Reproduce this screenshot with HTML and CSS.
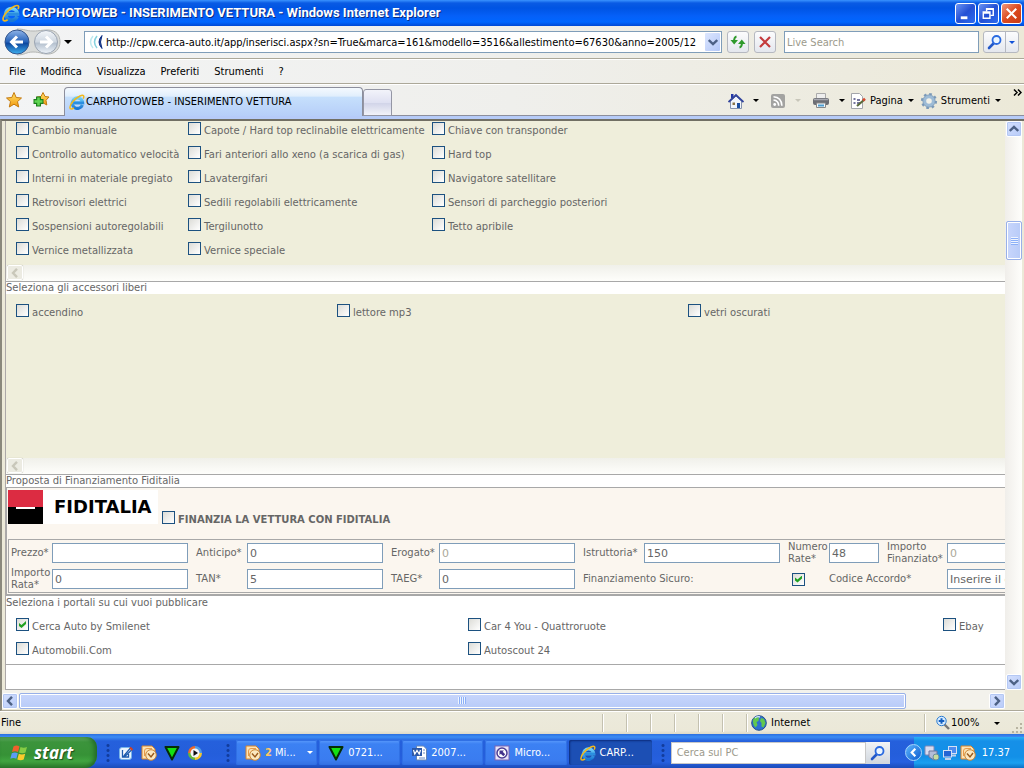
FILE: index.html
```html
<!DOCTYPE html>
<html lang="it">
<head>
<meta charset="utf-8">
<title>CARPHOTOWEB - INSERIMENTO VETTURA</title>
<link rel="stylesheet" href="styles.css">
</head>
<body>
<svg class="defs" aria-hidden="true">
  <defs>
    <linearGradient id="g-blue" x1="0" y1="0" x2="0" y2="1"><stop offset="0" stop-color="#8fb4e8"/><stop offset=".5" stop-color="#2461b8"/><stop offset=".55" stop-color="#0c469e"/><stop offset="1" stop-color="#3fb0ee"/></linearGradient>
    <linearGradient id="g-gray" x1="0" y1="0" x2="0" y2="1"><stop offset="0" stop-color="#f4f7fa"/><stop offset=".5" stop-color="#cdd6e0"/><stop offset=".55" stop-color="#b4c0ce"/><stop offset="1" stop-color="#eef4fa"/></linearGradient>
    <linearGradient id="g-e" x1="0" y1="0" x2="0" y2="1"><stop offset="0" stop-color="#6cd0fa"/><stop offset="1" stop-color="#1a78d4"/></linearGradient>
    <linearGradient id="g-star" x1="0" y1="0" x2="0" y2="1"><stop offset="0" stop-color="#ffe26a"/><stop offset="1" stop-color="#f39a10"/></linearGradient>
  </defs>
  <symbol id="ie" viewBox="0 0 16 16">
    <path d="M13.400 11A5.200 5.200 0 1 1 13.700 8.800H4" fill="none" stroke="url(#g-e)" stroke-width="3.200"/>
    <path d="M4.200 8.800H15" stroke="#2a8ee0" stroke-width="2.200"/>
    <path d="M14.200 4.600C15.600 1.800 14.400.4 11 2 6 4.400 1 10 .9 13.400.9 15.600 3 15.300 5 14" fill="none" stroke="#f2b91c" stroke-width="1.500"/>
  </symbol>
  <symbol id="outlook" viewBox="0 0 16 16">
    <path d="M1 1h10l3 3v3H8v7H1z" fill="#fde3b4" stroke="#d6822a"/>
    <path d="M3.500 11V6q0-2.500 2.500-2.500h5" fill="none" stroke="#e89a48"/>
    <circle cx="10" cy="10" r="5.300" fill="#fbe8c0" stroke="#c98432"/>
    <path d="M7 8.500l3 3.500 3-4" fill="none" stroke="#9a5a1c" stroke-width="1.400"/>
  </symbol>
  <symbol id="tri" viewBox="0 0 16 16"><path d="M1.500 2h13L8 14.500z" fill="#14e014" stroke="#062c06" stroke-width="2" stroke-linejoin="round"/></symbol>
  <symbol id="lens" viewBox="0 0 16 16"><path d="M6.500 9.500L2 14" stroke="#2358c8" stroke-width="2.600" stroke-linecap="round"/><circle cx="9.500" cy="6" r="4" fill="#eaf5ff" stroke="#2a6ae0" stroke-width="1.800"/></symbol>
  <symbol id="plus-lens" viewBox="0 0 16 16"><path d="M9 9l5 5" stroke="#777" stroke-width="2.400"/><circle cx="6.500" cy="6" r="4.700" fill="#d8ecff" stroke="#2b7bd0"/><path d="M6.500 3.200v5.600M3.700 6h5.600" stroke="#1560c0" stroke-width="2"/></symbol>
  <symbol id="chev-left" viewBox="0 0 10 10"><path d="M7 .8L3 5l4 4.200" fill="none" stroke="currentColor" stroke-width="2.400"/></symbol>
  <symbol id="chev-right" viewBox="0 0 10 10"><path d="M3 .8L7 5 3 9.200" fill="none" stroke="currentColor" stroke-width="2.400"/></symbol>
  <symbol id="chev-up" viewBox="0 0 10 10"><path d="M.8 7L5 3l4.200 4" fill="none" stroke="currentColor" stroke-width="2.400"/></symbol>
  <symbol id="chev-down" viewBox="0 0 10 10"><path d="M.8 3L5 7l4.200-4" fill="none" stroke="currentColor" stroke-width="2.400"/></symbol>
</svg>

<header class="titlebar">
  <svg class="i18"><use href="#ie"/></svg>
  <h1>CARPHOTOWEB - INSERIMENTO VETTURA - Windows Internet Explorer</h1>
  <div class="win-buttons">
    <button class="win" aria-label="Riduci a icona"><svg viewBox="0 0 20 20"><path d="M5 14.500h7" stroke="#fff" stroke-width="3"/></svg></button>
    <button class="win" aria-label="Ripristina"><svg viewBox="0 0 20 20"><path d="M8 8V5h7v7h-3M8 5.500h7" fill="none" stroke="#fff" stroke-width="1.500"/><path d="M4.500 8.500h7v6.500h-7zM4.500 9.500h7" fill="none" stroke="#fff" stroke-width="1.500"/></svg></button>
    <button class="win close" aria-label="Chiudi"><svg viewBox="0 0 20 20"><path d="M5 5l10 10M15 5L5 15" stroke="#fff" stroke-width="2.200"/></svg></button>
  </div>
</header>

<div class="address-row">
  <button class="nav" aria-label="Indietro e avanti"><svg viewBox="0 0 58 28">
    <path d="M14 1c8 0 9 2 16 2s8-1 15-1c8 0 12 5 12 12s-5 12-12 12c-7 0-8-2-15-2s-8 3-16 3" fill="#d9dbd9" stroke="#b4b6b4"/>
    <circle cx="14" cy="14" r="12" fill="url(#g-blue)" stroke="#34558c"/>
    <path d="M20 14H9M14 8.500L8.500 14l5.500 5.500" fill="none" stroke="#fff" stroke-width="3"/>
    <circle cx="43" cy="14" r="11.500" fill="url(#g-gray)" stroke="#9aa4b2"/>
    <path d="M37 14h11M43 8.500l5.500 5.500-5.500 5.500" fill="none" stroke="#fff" stroke-width="3"/>
  </svg></button>
  <button class="drop" aria-label="Pagine recenti"><i class="arrow"></i></button>
  <div class="address">
    <svg class="i16" viewBox="0 0 16 16"><path d="M5 2Q0 8 5 14" fill="none" stroke="#bfe9ee" stroke-width="1.500"/><path d="M9 2Q4 8 9 14" fill="none" stroke="#86d2de" stroke-width="1.500"/><path d="M14 1.500Q8 8 14 14.500Q11 8 14 1.500z" fill="#0a2c80" stroke="#0a2c80"/></svg>
    <input aria-label="Indirizzo" value="http://cpw.cerca-auto.it/app/inserisci.aspx?sn=True&amp;marca=161&amp;modello=3516&amp;allestimento=67630&amp;anno=2005/12">
    <button class="combo" aria-label="Mostra indirizzi"><svg><use href="#chev-down"/></svg></button>
  </div>
  <button class="sq" aria-label="Aggiorna"><svg viewBox="0 0 16 16"><path d="M6.500 2.500Q4 3 4 8" fill="none" stroke="#2f9a2c" stroke-width="2"/><path d="M.5 6H8L4.200 10.500z" fill="#2f9a2c"/><path d="M9.500 13.500Q12 13 12 8" fill="none" stroke="#2f9a2c" stroke-width="2"/><path d="M8 10h7.500L11.800 5.500z" fill="#2f9a2c"/></svg></button>
  <button class="sq" aria-label="Interrompi"><svg viewBox="0 0 16 16"><path d="M3 3l10 10M13 3L3 13" stroke="#c43a3c" stroke-width="2.200"/></svg></button>
  <input class="live" aria-label="Live Search" placeholder="Live Search">
  <div class="search-pair">
    <button aria-label="Cerca"><svg class="i16"><use href="#lens"/></svg></button>
    <button aria-label="Opzioni di ricerca"><i class="arrow blue"></i></button>
  </div>
</div>

<nav class="menu">
  <a href="#">File</a><a href="#">Modifica</a><a href="#">Visualizza</a><a href="#">Preferiti</a><a href="#">Strumenti</a><a href="#">?</a>
</nav>

<div class="tab-row">
  <button class="bare" aria-label="Preferiti"><svg class="i18" viewBox="0 0 18 18"><path d="M9 1.500l2.200 5 5.300.5-4 3.600 1.200 5.400L9 13.200 4.300 16l1.200-5.400-4-3.600 5.300-.5z" fill="url(#g-star)" stroke="#c47a10"/></svg></button>
  <button class="bare" aria-label="Aggiungi a Preferiti"><svg class="i18" viewBox="0 0 18 18"><path d="M11 1.500l2 4 4 .5-3 3.300.8 4.700-3.800-2.200L7 14l.8-5L5 6l4-.5z" fill="url(#g-star)" stroke="#c47a10"/><path d="M6.500 5.500v10M1.500 10.500h10" stroke="#1c7d1c" stroke-width="5"/><path d="M6.500 6.500v8M2.500 10.500h8" stroke="#5fd552" stroke-width="2.600"/></svg></button>
  <a class="tab" href="#"><svg class="i16"><use href="#ie"/></svg>CARPHOTOWEB - INSERIMENTO VETTURA</a>
  <button class="new-tab" aria-label="Nuova scheda"></button>
  <div class="commands">
    <button class="cmd" aria-label="Pagina iniziale"><svg class="i16" viewBox="0 0 16 16"><path d="M3 1h2.500v4H3z" fill="#2438a8"/><path d="M2.500 8L8 3l5.500 5v7.500h-11z" fill="#f2f5fb" stroke="#8492ae"/><path d="M.5 9L8 2l7.500 7" fill="none" stroke="#32449c" stroke-width="1.800"/><path d="M9 10h3v5H9z" fill="#1c4ea0"/><path d="M4.500 9.500h2.500v2.500H4.500z" fill="#8a7448"/></svg><i class="arrow"></i></button>
    <button class="cmd" aria-label="Feed"><svg class="i16" viewBox="0 0 16 16"><rect x="1" y="1" width="14" height="14" rx="2" fill="#a3a3a1"/><circle cx="4.700" cy="11.500" r="1.400" fill="#fff"/><path d="M3.500 7q5 .5 5.200 5.700M3.500 3.800q8 .6 8.400 8.900" fill="none" stroke="#fff" stroke-width="1.600"/></svg><i class="arrow dim"></i></button>
    <button class="cmd print" aria-label="Stampa"><svg class="i18" viewBox="0 0 18 18"><path d="M4.500 1.500h9V8h-9z" fill="#eee" stroke="#aaa"/><rect x="1" y="6" width="16" height="7" rx="2" fill="#6c6e74"/><path d="M2 7.500h14" stroke="#a8aab2" stroke-width="1.500"/><path d="M4.500 11h9v4.500h-9z" fill="#f4f8fc" stroke="#888"/><path d="M6 13.500h6" stroke="#4f9fd0" stroke-width="2"/></svg><i class="arrow"></i></button>
    <button class="cmd tight"><svg class="i18" viewBox="0 0 18 18"><path d="M2.500 1.500h8l3 3v12h-11z" fill="#fff" stroke="#a3a5aa"/><path d="M4.500 7h2M4.500 11h2M8 8h3M8 11h3" stroke="#4a4a80" stroke-width="1.500"/><path d="M8 14l7.500-6.500" stroke="#5a6a3c" stroke-width="2.200"/><path d="M14 8.500l2-1.800" stroke="#d94a30" stroke-width="2.500"/></svg>Pagina<i class="arrow"></i></button>
    <button class="cmd tight"><svg class="i18" viewBox="0 0 18 18"><circle cx="9" cy="9" r="6.800" fill="none" stroke="#7c9ab8" stroke-width="2.600" stroke-dasharray="2.600 2.740"/><circle cx="9" cy="9" r="4.500" fill="#f1f0e8" stroke="#9dbbd6" stroke-width="3.400"/><circle cx="9" cy="9" r="6.200" fill="none" stroke="#6f8fae" stroke-width=".6"/></svg>Strumenti<i class="arrow"></i></button>
  </div>
  <button class="bare more" aria-label="Altri comandi"><svg viewBox="0 0 9 7"><path d="M1 .5l3 3-3 3M5 .5l3 3-3 3" fill="none" stroke="#000" stroke-width="1.500"/></svg></button>
</div>

<main class="viewport">
  <div class="page-line">
    <div class="page">
      <section class="group opts">
        <label><input type="checkbox"><span>Cambio manuale</span></label>
        <label><input type="checkbox"><span>Capote / Hard top reclinabile elettricamente</span></label>
        <label><input type="checkbox"><span>Chiave con transponder</span></label>
        <label><input type="checkbox"><span>Controllo automatico velocità</span></label>
        <label><input type="checkbox"><span>Fari anteriori allo xeno (a scarica di gas)</span></label>
        <label><input type="checkbox"><span>Hard top</span></label>
        <label><input type="checkbox"><span>Interni in materiale pregiato</span></label>
        <label><input type="checkbox"><span>Lavatergifari</span></label>
        <label><input type="checkbox"><span>Navigatore satellitare</span></label>
        <label><input type="checkbox"><span>Retrovisori elettrici</span></label>
        <label><input type="checkbox"><span>Sedili regolabili elettricamente</span></label>
        <label><input type="checkbox"><span>Sensori di parcheggio posteriori</span></label>
        <label><input type="checkbox"><span>Sospensioni autoregolabili</span></label>
        <label><input type="checkbox"><span>Tergilunotto</span></label>
        <label><input type="checkbox"><span>Tetto apribile</span></label>
        <label><input type="checkbox"><span>Vernice metallizzata</span></label>
        <label><input type="checkbox"><span>Vernice speciale</span></label>
      </section>
      <div class="strip"><button aria-label="Scorri a sinistra" disabled><svg><use href="#chev-left"/></svg></button></div>
      <h2>Seleziona gli accessori liberi</h2>
      <section class="group free">
        <label><input type="checkbox"><span>accendino</span></label>
        <label><input type="checkbox"><span>lettore mp3</span></label>
        <label><input type="checkbox"><span>vetri oscurati</span></label>
      </section>
      <div class="strip"><button aria-label="Scorri a sinistra" disabled><svg><use href="#chev-left"/></svg></button></div>
      <h2>Proposta di Finanziamento Fiditalia</h2>
      <section class="finance">
        <div class="brand-row">
          <div class="brand">
            <svg viewBox="0 0 35 34"><path d="M0 0h35v17H0z" fill="#dc2c42"/><path d="M0 17h35v17H0z" fill="#000"/><path d="M8 18h19" stroke="#fff" stroke-width="2"/></svg>
            <strong>FIDITALIA</strong>
          </div>
          <label class="fund"><input type="checkbox"><span>FINANZIA LA VETTURA CON FIDITALIA</span></label>
        </div>
        <form class="fields">
          <label for="f1">Prezzo*</label><input id="f1">
          <label for="f2">Anticipo*</label><input id="f2" value="0">
          <label for="f3">Erogato*</label><input id="f3" value="0" class="off" readonly>
          <label for="f4">Istruttoria*</label><input id="f4" value="150">
          <label for="f5">Numero Rate*</label><input id="f5" value="48">
          <label for="f6">Importo Finanziato*</label><input id="f6" value="0" class="off" readonly>
          <label for="f7">Importo Rata*</label><input id="f7" value="0">
          <label for="f8">TAN*</label><input id="f8" value="5">
          <label for="f9">TAEG*</label><input id="f9" value="0">
          <label for="f10" class="span2">Finanziamento Sicuro:</label><input id="f10" type="checkbox" checked>
          <label for="f11" class="span2">Codice Accordo*</label><input id="f11" value="Inserire il codice">
        </form>
      </section>
      <h2>Seleziona i portali su cui vuoi pubblicare</h2>
      <section class="portals">
        <label><input type="checkbox" checked><span>Cerca Auto by Smilenet</span></label>
        <label><input type="checkbox"><span>Car 4 You - Quattroruote</span></label>
        <label><input type="checkbox"><span>Ebay</span></label>
        <label><input type="checkbox"><span>Automobili.Com</span></label>
        <label><input type="checkbox"><span>Autoscout 24</span></label>
      </section>
    </div>
    <div class="vscroll">
      <button class="sb" aria-label="Scorri in alto"><svg><use href="#chev-up"/></svg></button>
      <div class="vtrack"><div class="vthumb"></div></div>
      <button class="sb" aria-label="Scorri in basso"><svg><use href="#chev-down"/></svg></button>
    </div>
  </div>
  <div class="hscroll">
    <button class="sb" aria-label="Scorri a sinistra"><svg><use href="#chev-left"/></svg></button>
    <div class="htrack"><div class="hthumb"></div></div>
    <button class="sb" aria-label="Scorri a destra"><svg><use href="#chev-right"/></svg></button>
  </div>
</main>

<div class="status">
  <span class="done">Fine</span>
  <i class="cell"></i><i class="cell"></i><i class="cell"></i><i class="cell"></i><i class="cell"></i><i class="cell"></i>
  <span class="zone"><svg class="i16" viewBox="0 0 16 16"><circle cx="8" cy="8" r="7.300" fill="#2e6fd0" stroke="#24508c"/><path d="M2.500 3.500q3-2.500 5.500-1l-.5 3.500-2 1 1 3-2 2.500Q.8 9 2.500 3.500zM10 3l3 1 1.500 4-2 4.500-2-1V8L9 6z" fill="#62c84c"/><path d="M4 3q2-2 5-1" stroke="#cfe8ff" stroke-width="1.400" fill="none"/></svg>Internet</span>
  <button class="zoom"><svg class="i16"><use href="#plus-lens"/></svg>100%<i class="arrow"></i></button>
  <svg class="grip" viewBox="0 0 12 12"><path d="M9 1h2v2H9zM9 5h2v2H9zM9 9h2v2H9zM5 5h2v2H5zM5 9h2v2H5zM1 9h2v2H1z" fill="#b8b4a2"/></svg>
</div>

<footer class="taskbar">
  <button class="start"><svg viewBox="0 0 20 18"><path d="M3.500 2.500q3-2 6 0L8 8q-3-1.600-6 0z" fill="#f0602c"/><path d="M10.500 3q3 1.600 6.500 0L15.500 8.500q-3 1.600-6.500 0z" fill="#86cc44"/><path d="M1.800 9.200q3-1.600 6 0L6.300 14.800q-3-1.600-6 0z" fill="#5c9cf4"/><path d="M8.800 9.800q3 1.600 6.400 0l-1.500 5.700q-3 1.600-6.400 0z" fill="#fbcb2c"/></svg>start</button>
  <i class="dots"></i>
  <div class="quick">
    <button class="bare" aria-label="Mostra desktop"><svg class="i16" viewBox="0 0 16 16"><rect x="1.500" y="2.500" width="12" height="12" rx="2.500" fill="#e8f4ff" stroke="#78b4e8"/><path d="M4.500 5v7h6V9M7 9.500L12.500 3l1.500 1.500-6 6-2 .5z" fill="#fff" stroke="#1c5cae" stroke-width="1.300"/><path d="M12 2.500l2.500 2.500" stroke="#d94020" stroke-width="2"/></svg></button>
    <button class="bare" aria-label="Outlook"><svg class="i16"><use href="#outlook"/></svg></button>
    <button class="bare" aria-label="Applicazione"><svg class="i16"><use href="#tri"/></svg></button>
    <button class="bare" aria-label="Lettore multimediale"><svg class="i16" viewBox="0 0 16 16"><path d="M8 8V1a7 7 0 0 0-7 7z" fill="#ef6a2a"/><path d="M8 8h7a7 7 0 0 0-7-7z" fill="#4f9be6"/><path d="M8 8v7a7 7 0 0 0 7-7z" fill="#f6c62c"/><path d="M8 8H1a7 7 0 0 0 7 7z" fill="#62b83c"/><circle cx="8" cy="8" r="4.500" fill="#f4f6fa"/><path d="M6.500 5l4.500 3-4.500 3z" fill="#111"/></svg></button>
  </div>
  <i class="dots"></i>
  <div class="tasks">
    <button class="task"><svg class="i16"><use href="#outlook"/></svg><span><b>2</b> Mi...</span><i class="arrow white"></i></button>
    <button class="task"><svg class="i16"><use href="#tri"/></svg><span>0721...</span></button>
    <button class="task"><svg class="i16" viewBox="0 0 16 16"><path d="M5.500 1h7l3 3v11h-10z" fill="#fff" stroke="#6484b4"/><path d="M12 5h2M12 8h2M8 13h6" stroke="#6a8ac4"/><rect x="1" y="3" width="10" height="8" fill="#2c58a8"/><path d="M2.500 5l1.300 4L6 5.500 8.200 9l1.300-4" fill="none" stroke="#fff" stroke-width="1.200"/></svg><span>2007...</span></button>
    <button class="task"><svg class="i16" viewBox="0 0 16 16"><rect x="1" y="1" width="14" height="14" fill="#e8e4f8" stroke="#7864b4"/><circle cx="8" cy="8" r="5" fill="#fff" stroke="#4c3c94" stroke-width="1.500"/><path d="M5.500 5.500H10L8.700 6.800l2.500 2.500-1.900 1.900-2.500-2.500L5.500 10z" fill="#43338c"/></svg><span>Micro...</span></button>
    <button class="task active"><svg class="i16"><use href="#ie"/></svg><span>CARP...</span></button>
  </div>
  <i class="dots"></i>
  <div class="pc-search"><input aria-label="Cerca sul PC" placeholder="Cerca sul PC"><button aria-label="Cerca"><svg class="i16"><use href="#lens"/></svg></button></div>
  <div class="tray">
    <button class="expand" aria-label="Mostra icone nascoste"><svg><use href="#chev-left"/></svg></button>
    <svg class="i16" viewBox="0 0 16 16"><rect x="1" y="1" width="9" height="9" rx="1" fill="#d8dcf0" stroke="#8088b4"/><path d="M5 6h8v7l-3 2-5-3z" fill="#b4bcd8" stroke="#6c749c"/><circle cx="12" cy="12" r="3" fill="#c8dca0" stroke="#6f8c9c"/></svg>
    <svg class="i16" viewBox="0 0 16 16"><rect x="6.500" y="1.500" width="8" height="7" fill="#4c8cf0" stroke="#d4e0f4"/><rect x="1.500" y="5.500" width="8" height="6.500" fill="#2464d4" stroke="#d4e0f4"/><path d="M3 14h6M10 10.500h4" stroke="#c0d0ec" stroke-width="2"/></svg>
    <svg class="i16"><use href="#outlook"/></svg>
    <time>17.37</time>
  </div>
</footer>
</body>
</html>
```
FILE: styles.css
```css
* { box-sizing: border-box; }
body {
  margin: 0;
  height: 100vh;
  display: flex;
  flex-direction: column;
  overflow: hidden;
  background: #ece9d8;
  color: #000;
  font: 11px/14px "DejaVu Sans Condensed", "DejaVu Sans", sans-serif;
}
body > * { flex: none; }
button, input { font: inherit; color: inherit; margin: 0; padding: 0; border: 0; background: none; }
button { display: flex; align-items: center; justify-content: center; flex: none; }
a { color: inherit; text-decoration: none; }
svg { flex: none; display: block; }
.defs { position: absolute; width: 0; height: 0; }
.i16 { width: 16px; height: 16px; }
.i18 { width: 18px; height: 18px; }
.arrow { flex: none; border: 3px solid transparent; border-top-color: #000; border-bottom: 0; }
.arrow.blue { border-top-color: #1252d8; }
.arrow.dim { border-top-color: #c8c6ba; }
.arrow.white { border-top-color: #fff; }

/* Title bar */
.titlebar {
  height: 26px;
  display: flex;
  align-items: center;
  gap: 2px;
  padding: 0 2px;
  background: linear-gradient(#3a93ff 0, #0a5be4 3px, #0054e3 8px, #0560f8 16px, #0066ff 22px, #0048d4 26px);
  color: #fff;
}
.titlebar h1 { flex: 1; margin: 0; font: bold 13px/20px Roboto, sans-serif; text-shadow: 1px 1px #0a2a80; white-space: nowrap; }
.win-buttons { display: flex; gap: 2px; }
.win { width: 21px; height: 21px; border: 1px solid #fff; border-radius: 3px; background: linear-gradient(135deg, #6a94f4, #2450d4 50%, #2c6cf0); }
.win svg { width: 19px; height: 19px; }
.win.close { background: linear-gradient(135deg, #f0987c, #dc4a20 50%, #c83c14); }

/* Address bar */
.address-row {
  height: 33px;
  display: flex;
  align-items: center;
  padding: 0 5px 0 3px;
  border-bottom: 1px solid #aca899;
  background: linear-gradient(90deg, #f3f4f5, #efefec 50%, #ece9d8);
}
.nav svg { width: 58px; height: 28px; }
.drop { width: 14px; margin-right: 9px; }
.drop .arrow { border-width: 4px; border-bottom: 0; }
.address { flex: 1; height: 22px; display: flex; align-items: center; border: 1px solid #7f9db9; background: #fff; }
.address .i16 { margin: 0 2px 0 3px; }
.address input { flex: 1; min-width: 0; height: 20px; outline: 0; }
.combo { width: 15px; height: 18px; margin-right: 1px; border-radius: 1px; background: linear-gradient(135deg, #dce6fe, #b4c8f8); color: #4d6185; }
.combo svg, .sb svg, .strip svg { width: 10px; height: 10px; }
.sq, .search-pair { height: 22px; border: 1px solid #b5b8c0; border-radius: 3px; background: linear-gradient(#fcfcfd, #e4e7ee); }
.sq { width: 22px; margin-left: 5px; }
.sq svg { width: 16px; height: 16px; }
.live { width: 195px; height: 22px; margin: 0 4px 0 8px; padding: 0 2px; border: 1px solid #7f9db9; background: #fff; }
::placeholder { color: #9c9a8c; opacity: 1; }
.search-pair { display: flex; width: 36px; }
.search-pair button { width: 21px; }
.search-pair button + button { width: 13px; border-left: 1px solid #b5b8c0; }

/* Menu */
.menu {
  height: 25px;
  display: flex;
  align-items: center;
  gap: 15px;
  padding: 0 9px;
  border-top: 1px solid #fff;
  border-bottom: 1px solid #aca899;
  background: linear-gradient(90deg, #f3f4f5, #efefec 50%, #ece9d8);
}

/* Tabs and commands */
.tab-row {
  height: 35px;
  display: flex;
  align-items: flex-start;
  padding: 0 2px 0 5px;
  border-top: 1px solid #fff;
  border-bottom: 3px solid #b6cbf8;
  background: linear-gradient(90deg, #f3f4f5, #efefec 50%, #ece9d8);
  box-shadow: inset 0 -1px #8c8e9c;
}
.bare { height: 30px; }
.tab-row .bare { width: 18px; margin-right: 9px; }
.tab {
  width: 299px;
  height: 29px;
  margin: 2px 0 0 5px;
  display: flex;
  align-items: center;
  gap: 1px;
  padding-left: 4px;
  border: 1px solid #8c8e9c;
  border-bottom: 0;
  border-radius: 4px 4px 0 0;
  background: linear-gradient(#f4f9fe, #e0eefc 30%, #c6e0fc 31%, #b6cef8);
}
.new-tab { width: 29px; height: 27px; margin-top: 4px; border: 1px solid #9496a4; border-radius: 3px 3px 0 0; background: linear-gradient(#f2f3fa, #dfe1f2 50%, #d0d3e8 51%, #f2f3f9); }
.commands { flex: 1; display: flex; justify-content: flex-end; align-items: center; height: 31px; }
.cmd { height: 28px; gap: 9px; margin-right: 11px; }
.cmd.print { margin-right: 4px; }
.cmd.tight { gap: 3px; margin-right: 6px; }
.cmd.tight .arrow { margin-left: 2px; }
.tab-row .more { width: 9px; height: 14px; margin: 0 0 0 6px; }
.more svg { width: 9px; height: 7px; }

/* Viewport */
.viewport {
  flex: 1;
  min-height: 0;
  display: flex;
  flex-direction: column;
  padding: 0 2px 1px 3px;
  border-top: 2px solid #716f64;
  border-left: 2px solid #8a887c;
  border-bottom: 1px solid #aca899;
}
.page-line { flex: 1; min-height: 0; display: flex; }
.page {
  flex: 1;
  min-width: 0;
  overflow: hidden;
  border-left: 1px solid #aca8a8;
  border-bottom: 1px solid #a8a8a8;
  background: #fff;
  color: #666;
  font: 10px/12px "DejaVu Sans", sans-serif;
}
.group { background: #efeedb; }
.opts, .free, .portals { display: grid; grid-auto-rows: 24px; padding-left: 10px; }
.opts { grid-template-columns: 172px 244px 1fr; }
.free { grid-template-columns: 321px 351px 1fr; height: 164px; padding-top: 9px; }
.portals { grid-template-columns: 452px 475px 1fr; height: 56px; padding-top: 8px; border-bottom: 1px solid #a8a8a8; }
.page label { white-space: nowrap; }
.opts label, .free label, .portals label, .fund { display: flex; gap: 3px; align-items: flex-start; padding-top: 1px; }
label span { padding-top: 3px; }
[type="checkbox"] {
  appearance: none;
  flex: none;
  width: 13px;
  height: 13px;
  border: 1px solid #1c5180;
  background: linear-gradient(135deg, #dcdcd7, #fff);
}
[type="checkbox"]:checked::after {
  content: "";
  display: block;
  width: 7px;
  height: 7px;
  margin: 2px;
  background: #21a121;
  clip-path: polygon(0 28%, 36% 58%, 100% 0, 100% 42%, 36% 100%, 0 70%);
}
.strip { height: 17px; border-bottom: 1px solid #a8a8a8; background: linear-gradient(#f0f0ea, #fefefb); }
.strip button { width: 16px; height: 15px; margin-left: 1px; border: 1px solid #fff; border-radius: 2px; background: #ecebe2; box-shadow: 0 0 1px #aaa899; color: #c9c7ba; }
.page h2 { margin: 0; font: inherit; height: 12px; white-space: nowrap; }

/* Financing form */
.finance { padding: 1px 0 1px 1px; border-top: 1px solid #a8a8a8; border-left: 1px solid #a8a8a8; border-bottom: 2px solid #a8a8a8; background: #fbf6ef; margin-bottom: 1px; }
.brand-row { display: flex; align-items: flex-end; gap: 4px; height: 50px; padding-bottom: 15px; }
.brand { width: 150px; height: 34px; display: flex; align-items: center; gap: 11px; background: #fff; color: #000; }
.brand svg { width: 35px; height: 34px; }
.brand strong { font: bold 18px/20px "DejaVu Sans", sans-serif; }
.fund { font-weight: bold; height: 14px; }
.fields {
  display: grid;
  grid-template-columns: 41px 144px 51px 144px 48px 144px 61px 144px 41px 58px 60px 136px;
  grid-auto-rows: 26px;
  align-items: center;
  padding-left: 2px;
  border: 1px solid #a8a8a8;
  border-right: 0;
}
.fields label { line-height: 12px; white-space: normal; }
.fields .span2 { grid-column: span 2; }
.fields input:not([type]) { width: 136px; height: 20px; padding: 0 2px; border: 1px solid #7f9db9; background: #fff; font-size: 11px; }
.fields #f5 { width: 50px; }
.fields .off { color: #aca899; }
.fields [type="checkbox"] { margin-left: 4px; }

/* Scrollbars */
.vscroll { width: 17px; flex: none; display: flex; flex-direction: column; padding-left: 1px; background: linear-gradient(90deg, #f0eeea, #fefefb); }
.sb { width: 16px; height: 16px; border: 1px solid #fff; border-radius: 2px; background: linear-gradient(135deg, #d4e0fe, #b8cbf8); box-shadow: inset 0 0 0 1px #b4c8f4; color: #4d6185; }
.vtrack { flex: 1; padding-top: 84px; }
.vthumb, .hthumb { border: 1px solid #98b0e8; border-radius: 2px; box-shadow: inset 0 0 0 1px #fff; }
.vthumb { height: 39px; background: repeating-linear-gradient(#eef4fe 0 1px, #8cb0f8 1px 2px) center / 7px 8px no-repeat, linear-gradient(90deg, #c8d6fc, #b8cbf8); }
.hscroll { height: 19px; flex: none; display: flex; align-items: center; margin: 0 17px 0 -3px; padding-top: 2px; background: #f3f2ec; }
.htrack { flex: 1; display: flex; padding-left: 1px; }
.hthumb { width: 91.4%; height: 16px; background: repeating-linear-gradient(90deg, #eef4fe 0 1px, #8cb0f8 1px 2px) center / 8px 7px no-repeat, linear-gradient(#c8d6fc, #b8cbf8); }

/* Status bar */
.status { height: 23px; display: flex; align-items: center; padding: 0 1px; border-top: 1px solid #fff; background: linear-gradient(#eceadc, #ebe8d8 85%, #dcd9c8); }
.done { flex: 1; }
.cell { width: 24px; height: 18px; border-left: 1px solid #c4c1b0; box-shadow: inset 1px 0 #fff; }
.zone { display: flex; align-items: center; gap: 4px; width: 178px; height: 18px; padding-left: 4px; border-left: 1px solid #c4c1b0; box-shadow: inset 1px 0 #fff; }
.zoom { height: 18px; padding-left: 10px; border-left: 1px solid #c4c1b0; box-shadow: inset 1px 0 #fff; width: 84px; justify-content: flex-start; }
.zoom .arrow { margin-left: 15px; }
.grip { width: 12px; height: 12px; align-self: flex-end; margin-left: 3px; }

/* Task bar */
.taskbar {
  height: 34px;
  display: flex;
  align-items: center;
  padding-top: 3px;
  background: linear-gradient(#2a6fe0 0, #3c8cf4 3px, #2560dc 7px, #245edb 20px, #2760e0 28px, #1c4cb8 34px);
  color: #fff;
}
.start {
  width: 97px;
  height: 31px;
  gap: 4px;
  padding-right: 14px;
  border-radius: 0 10px 12px 0;
  background: linear-gradient(#68b068 0, #3c943c 5px, #369236 18px, #40a440 24px, #2c7c2c 31px);
  box-shadow: inset -3px 0 4px #246c28;
  font: italic bold 17px/20px "Open Sans", sans-serif;
  text-shadow: 1px 1px 1px #1c4c1c;
}
.start svg { width: 20px; height: 18px; }
.dots { flex: none; width: 6px; height: 20px; margin: 0 5px 0 8px; background: radial-gradient(circle, #123c9c 1px, transparent 2px) 0 0 / 6px 5px; }
.quick { display: flex; flex: none; gap: 7px; width: 101px; padding-left: 2px; }
.tasks { flex: 1; display: flex; gap: 2px; min-width: 0; }
.task { flex: 1; min-width: 0; height: 25px; justify-content: flex-start; gap: 4px; padding: 0 4px 0 9px; border-radius: 2px; background: linear-gradient(#5c9cfc, #3c81f3 4px, #3a7cf0 20px, #3470e0); box-shadow: inset 0 0 0 1px #3070e4; white-space: nowrap; }
.task .arrow { margin-left: auto; }
.task b { color: #ffc860; }
.task.active { background: #1c4fb4; box-shadow: inset 1px 1px 2px #0c2c7c; padding-left: 11px; }
.pc-search { display: flex; flex: none; width: 219px; height: 22px; }
.pc-search input { flex: 1; min-width: 0; padding: 0 5px; background: #fff; color: #333; border: 1px solid #c8c8c8; }
.pc-search button { width: 24px; background: linear-gradient(#f2f4f6, #d0d6de); }
.tray { flex: none; height: 31px; display: flex; align-items: center; gap: 2px; margin-left: 24px; padding-right: 14px; background: linear-gradient(#2ab0f4 0, #1690e8 4px, #1290e8 20px, #1ba0f0 26px, #0c70c4 31px); }
.tray time { margin-left: 4px; }
.expand { width: 17px; height: 17px; margin-left: -9px; border: 1px solid #a4d4fc; border-radius: 50%; background: linear-gradient(135deg, #5cb4fc, #0c5cd0); }
.expand svg { width: 9px; height: 9px; }
```
